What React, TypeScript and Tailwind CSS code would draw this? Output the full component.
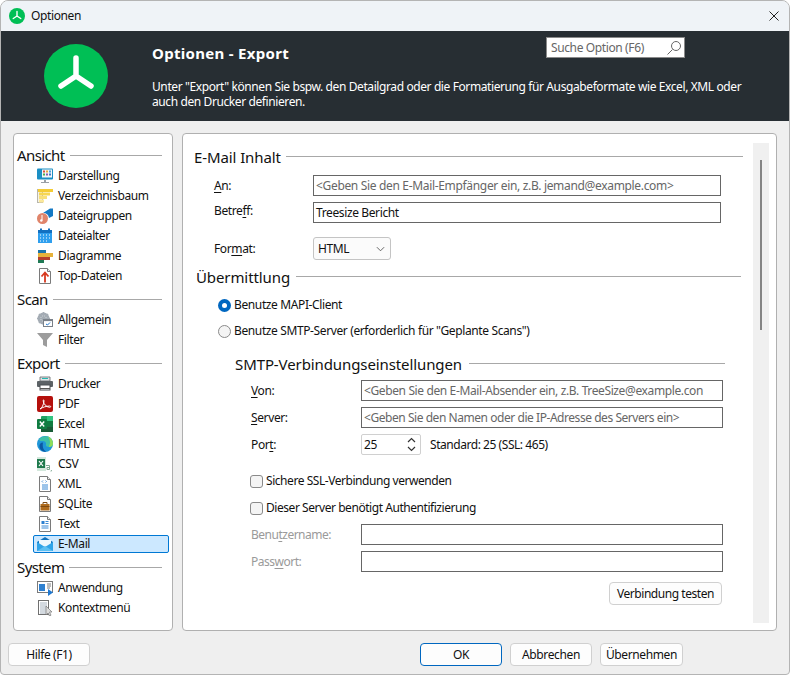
import React from "react";

const Page = ({ children }: { children?: React.ReactNode }) => (
  <svg viewBox="0 0 16 16" className="w-4 h-4">
    <path d="M2.5.5h8l3 3v12h-11z" fill="#fff" stroke="#7a7a7a" />
    <path d="M10.5.5v3h3" fill="#eee" stroke="#7a7a7a" />
    {children}
  </svg>
);

const icons: Record<string, React.ReactNode> = {
  Darstellung: (
    <svg viewBox="0 0 16 16" className="w-4 h-4">
      <rect x="0" y="0.5" width="16" height="11" rx="1" fill="#1b8fc4" />
      <rect x="5" y="1.5" width="10" height="8" fill="#f4f6f8" />
      <rect x="6" y="2.5" width="2" height="2" fill="#d9503f" />
      <rect x="9" y="2.5" width="2" height="2" fill="#e8a93a" />
      <rect x="12" y="2.5" width="2" height="2" fill="#4a9fd8" />
      <rect x="6" y="5.5" width="2" height="2" fill="#4caf50" />
      <rect x="9" y="5.5" width="2" height="2" fill="#8c5ab0" />
      <rect x="12" y="5.5" width="2" height="2" fill="#3c78c8" />
      <rect x="7" y="12" width="2" height="2" fill="#9aa0a6" />
      <rect x="4" y="14" width="8" height="1" fill="#9aa0a6" />
    </svg>
  ),
  Verzeichnisbaum: (
    <svg viewBox="0 0 16 16" className="w-4 h-4">
      <rect x="0.5" y="1.5" width="5" height="13" fill="#f6f3e6" stroke="#b8b6ac" />
      <rect x="1" y="1" width="15" height="3" fill="#f4cc35" />
      <rect x="2" y="4.500" width="11" height="3" fill="#f6d653" />
      <rect x="2" y="8" width="8" height="3" fill="#f8df78" />
      <rect x="2" y="11.500" width="5" height="3" fill="#fbe89a" />
    </svg>
  ),
  Dateigruppen: (
    <svg viewBox="0 0 16 16" className="w-4 h-4">
      <path d="M6 5 13 .5h3V8l-4 2a6 6 0 0 0-6-5z" fill="#1479c4" />
      <circle cx="5.5" cy="10.5" r="5.5" fill="#e0846a" />
      <path d="M5 7v5.5" stroke="#fff" strokeWidth="1" />
      <circle cx="4.3" cy="12.5" r="1.2" fill="#fff" />
    </svg>
  ),
  Dateialter: (
    <svg viewBox="0 0 16 16" className="w-4 h-4">
      <rect x="1" y="2" width="14" height="13" fill="#2f9fee" />
      <rect x="1" y="2" width="14" height="3" fill="#1270c0" />
      <rect x="3" y="0.5" width="2" height="3" fill="#1270c0" />
      <rect x="11" y="0.5" width="2" height="3" fill="#1270c0" />
      <path d="M3 7h1M6 7h1M9 7h1M12 7h1M3 10h1M6 10h1M9 10h1M12 10h1M3 13h1M6 13h1M9 13h1" stroke="#fff" />
    </svg>
  ),
  Diagramme: (
    <svg viewBox="0 0 16 16" className="w-4 h-4">
      <rect x="1" y="2" width="8" height="4" fill="#1b75a8" />
      <rect x="1" y="5" width="15" height="4" fill="#e6b23a" />
      <rect x="1" y="9" width="12" height="3" fill="#b5402c" />
      <rect x="1" y="12" width="6" height="3" fill="#1f7a55" />
    </svg>
  ),
  "Top-Dateien": (
    <Page>
      <path d="M8 14.500V5M4.500 8.500 8 4.500l3.500 4" fill="none" stroke="#d8391f" strokeWidth="1.800" />
    </Page>
  ),
  Allgemein: (
    <svg viewBox="0 0 16 16" className="w-4 h-4">
      <circle cx="6.5" cy="6.5" r="4.5" fill="none" stroke="#a4acb4" strokeWidth="3" />
      <path d="M6.5 0v13M0 6.5h13M2 2l9 9M11 2l-9 9" stroke="#a4acb4" strokeWidth="1.6" />
      <rect x="6.5" y="7.5" width="9" height="7" fill="#fff" stroke="#7a8088" />
      <rect x="6.5" y="7.5" width="9" height="1.6" fill="#7a8088" />
      <path d="M9 12l1.5 1 2.500-2.500" fill="none" stroke="#1f78d0" />
    </svg>
  ),
  Filter: (
    <svg viewBox="0 0 16 16" className="w-4 h-4">
      <path d="M0 1h16L10 8v7l-4-2V8z" fill="#9c9c9c" />
    </svg>
  ),
  Drucker: (
    <svg viewBox="0 0 16 16" className="w-4 h-4">
      <path d="M3 1h10v4H3z" fill="#dfe3e6" stroke="#606468" strokeWidth=".8" />
      <rect x="5" y="2" width="6" height="1" fill="#22b8b0" />
      <rect x="0" y="5" width="16" height="6" rx="1" fill="#5c6266" />
      <rect x="3" y="9" width="10" height="5" fill="#fff" stroke="#4a4f52" />
      <path d="M3 12.500h10" stroke="#555" />
    </svg>
  ),
  PDF: (
    <svg viewBox="0 0 16 16" className="w-4 h-4">
      <rect x="0" y="0" width="16" height="16" rx="2" fill="#b5100c" />
      <path d="M3 13c2-1 3.500-4 4-8 .2-1.500-1-1.500-.8 0 .4 3 3 6 6.500 6.300 1.500 0 1.300-1.500-.2-1.300C9 10.300 6 11 3 13z" fill="none" stroke="#fff" strokeWidth="1" />
    </svg>
  ),
  Excel: (
    <svg viewBox="0 0 16 16" className="w-4 h-4">
      <rect x="4" y="0" width="12" height="16" rx="1" fill="#21a366" />
      <rect x="10" y="0" width="6" height="5" fill="#33c481" />
      <rect x="4" y="5" width="12" height="5.500" fill="#107c41" />
      <rect x="4" y="10.500" width="12" height="5.500" fill="#185c37" />
      <rect x="0" y="3" width="10" height="10" rx="1" fill="#107c41" />
      <path d="M2.800 5.500l4.400 5M7.200 5.500l-4.400 5" stroke="#fff" strokeWidth="1.400" />
    </svg>
  ),
  HTML: (
    <svg viewBox="0 0 16 16" className="w-4 h-4">
      <circle cx="8" cy="8" r="8" fill="#1f96d8" />
      <path d="M2 3.500C4 .5 8-.5 11 .5c3 1 5 4 5 7.500 0 2-2 3-4 3-2 0-3.500-1-3-2.500.5-2-1-3.500-3-3.500-2 0-3.500.5-4-1.500z" fill="#3fc1a8" />
      <path d="M11 .5c3 1 5 4 5 7.500 0 2-2 3-4 3 0-2 1-2.500 1-4.500S12 2 11 .5z" fill="#8fdc5a" />
      <path d="M6 6.500c-2.500 0-4 2-3.500 4.500.6 3 3.500 5 7 4.800-2.500-1.300-4.500-4-3.500-9.300z" fill="#0c59a4" />
    </svg>
  ),
  CSV: (
    <svg viewBox="0 0 16 16" className="w-4 h-4">
      <rect x="0" y="1" width="9" height="14" fill="#d3e8dc" />
      <rect x="0" y="3" width="8" height="9" fill="#1f7a4d" />
      <path d="M2 5l4 5M6 5l-4 5" stroke="#fff" strokeWidth="1.200" />
      <path d="M9 9.500h3.500v4M12.500 11.500H10v2h2.500M14.500 14l-.5 1.500" fill="none" stroke="#7ea892" strokeWidth="1" />
    </svg>
  ),
  XML: (
    <Page>
      <path d="M6 4.500 5 5.500l1 1M8.500 4.500l1 1-1 1" fill="none" stroke="#2a7fd0" strokeWidth=".8" />
      <path d="M5 9h6M5 11h6M5 13h6" stroke="#3a8ad6" />
    </Page>
  ),
  SQLite: (
    <Page>
      <rect x="3.500" y="8" width="9" height="6.500" fill="#b06c1e" />
      <path d="M6 8V6.500h4V8" fill="none" stroke="#7e4a12" />
      <rect x="3.500" y="10" width="9" height="1" fill="#7e4a12" />
    </Page>
  ),
  Text: (
    <Page>
      <rect x="4.500" y="5" width="3" height="3" fill="#2a7fd0" />
      <path d="M8.500 5.500h3M8.500 7.500h3M4.500 10h7M4.500 12h7" stroke="#3a8ad6" />
    </Page>
  ),
  "E-Mail": (
    <svg viewBox="0 0 16 14" className="w-4 h-[14px]">
      <path d="M0 5 8 0l8 5v9H0z" fill="#1272bd" />
      <path d="M2 3h12v7H2z" fill="#eef8fd" />
      <path d="M0 5l8 5 8-5v9H0z" fill="#30a4e8" />
      <path d="M0 14l8-5 8 5z" fill="#5cc0f2" />
    </svg>
  ),
  Anwendung: (
    <svg viewBox="0 0 16 16" className="w-4 h-4">
      <rect x="0.500" y="1.500" width="15" height="11" fill="#fff" stroke="#7a7a7a" />
      <rect x="2" y="4" width="6" height="7" fill="#2f80d0" />
      <path d="M10 4h4M10 6h4M10 8h3" stroke="#7a7a7a" />
      <path d="M11 9v7l5-3.500z" fill="#1f78d0" />
    </svg>
  ),
  "Kontextmenü": (
    <svg viewBox="0 0 16 16" className="w-4 h-4">
      <rect x="1.500" y="0.500" width="10" height="14" fill="#fff" stroke="#707070" />
      <path d="M3 3h7M3 5h7M3 7h7M3 9h7M3 11h7M3 13h7" stroke="#a8b4c0" />
      <path d="M9 6v9l2-2 1.500 3 1.500-.8L12.500 12H15z" fill="#ddd" stroke="#777" strokeWidth=".7" />
    </svg>
  ),
};

const Logo = ({ className }: { className: string }) => (
  <svg viewBox="0 0 64 64" className={className}>
    <circle cx="32" cy="32" r="32" fill="#00bf55" />
    <path d="M32 14v18L17 42M32 32l15 10" fill="none" stroke="#fff" strokeWidth="5.500" strokeLinecap="round" strokeLinejoin="round" />
  </svg>
);

const SideHeading = ({ t }: { t: string }) => (
  <div className="h-6 flex items-center pt-[2px] gap-[5px] pr-[10px] pl-[3px]">
    <span className="text-[15px] leading-5 tracking-[-0.6px] text-[#111]">{t}</span>
    <span className="flex-1 h-px bg-[#a8a8a8]" />
  </div>
);

const SideItem = ({ t, selected }: { t: string; selected?: boolean }) => (
  <div className="h-5 py-px ml-[19px] mr-[3px]">
    <div
      className={
        "h-[18px] flex items-center gap-[5px] pl-[3px] rounded-[2px] border " +
        (selected ? "bg-[#cce8ff] border-[#0078d4]" : "border-transparent")
      }
    >
      <span className="w-4 flex justify-center shrink-0">{icons[t]}</span>
      <span className="text-[#111]">{t}</span>
    </div>
  </div>
);

const SectionHeading = ({ t, className, line }: { t: string; className: string; line: string }) => (
  <div className={"flex items-center " + className}>
    <span className="text-[15px] leading-5 tracking-[-0.1px] text-[#111] whitespace-nowrap">{t}</span>
    <span className={"h-px bg-[#a8a8a8] -mt-[2px] " + line} />
  </div>
);

const TextBox = ({ v, placeholder, className }: { v: string; placeholder?: boolean; className: string }) => (
  <div
    className={
      "h-[21px] border border-[#666] bg-white flex items-center pl-[2px] whitespace-nowrap overflow-hidden " +
      (placeholder ? "text-[#666] " : "text-[#111] ") +
      className
    }
  >
    {v}
  </div>
);

const Btn = ({ t, className }: { t: string; className: string }) => (
  <div className={"h-[23px] flex items-center justify-center rounded-[4px] border bg-[#fdfdfd] text-[#111] " + className}>{t}</div>
);

const Ul = ({ c }: { c: string }) => <span className="underline underline-offset-2">{c}</span>;

const Radio = ({ on }: { on?: boolean }) =>
  on ? (
    <span className="w-[13px] h-[13px] rounded-full bg-[#0067c0] flex items-center justify-center shrink-0">
      <span className="w-[5px] h-[5px] rounded-full bg-white" />
    </span>
  ) : (
    <span className="w-[13px] h-[13px] rounded-full border border-[#8a8a8a] bg-[#f4f4f4] shrink-0" />
  );

const Check = () => <span className="w-[13px] h-[13px] rounded-[3px] border border-[#8a8a8a] bg-[#f4f4f4] shrink-0" />;

export default function App() {
  return (
    <div className="w-[790px] h-[675px] flex flex-col bg-[#efefef] border border-[#b4b4b4] rounded-t-[8px] rounded-b-[4px] overflow-hidden text-[12px] leading-4 tracking-[-0.38px] text-[#111] font-['Noto_Sans',sans-serif]">
      <div className="h-[30px] bg-[#eff3f7] flex items-center pl-2 pr-[10px] shrink-0">
        <Logo className="w-4 h-4" />
        <span className="ml-[6px]">Optionen</span>
        <svg viewBox="0 0 10 10" className="w-[10px] h-[10px] ml-auto">
          <path d="M.5.500l9 9M9.500.500l-9 9" stroke="#222" strokeWidth="1" />
        </svg>
      </div>

      <div className="h-[90px] bg-[#272e33] flex shrink-0">
        <div className="pl-[43px] pt-[13px] w-[151px] shrink-0">
          <Logo className="w-16 h-16" />
        </div>
        <div className="w-[600px] text-white">
          <div className="flex items-start h-[46px]">
            <div className="mt-[12px] text-[15px] leading-5 font-bold w-[394px] tracking-[0.3px]">Optionen - Export</div>
            <div className="mt-[6px] w-[139px] h-[21px] bg-white border border-[#8a8a8a] flex items-center pl-1 pr-[2px] text-[#666]">
              <span>Suche Option (F6)</span>
              <svg viewBox="0 0 16 16" className="w-[16px] h-[16px] ml-auto">
                <circle cx="10" cy="6" r="4.500" fill="none" stroke="#666" />
                <path d="M6.500 9.500 1.500 14.500" stroke="#666" />
              </svg>
            </div>
          </div>
          <div className="flex flex-col mt-[2px] gap-0 whitespace-nowrap tracking-[-0.4px]">
            <span className="h-[15px] leading-[15px]">Unter "Export" können Sie bspw. den Detailgrad oder die Formatierung für Ausgabeformate wie Excel, XML oder</span>
            <span className="h-[15px] leading-[15px]">auch den Drucker definieren.</span>
          </div>
        </div>
      </div>

      <div className="flex-1 flex gap-[9px] pl-3 pr-3 pt-3">
        <div className="w-[160px] h-[498px] bg-white border border-[#b0b0b0] rounded-[4px] pt-[8px]">
          <SideHeading t="Ansicht" />
          {["Darstellung", "Verzeichnisbaum", "Dateigruppen", "Dateialter", "Diagramme", "Top-Dateien"].map((t) => (
            <SideItem key={t} t={t} />
          ))}
          <SideHeading t="Scan" />
          {["Allgemein", "Filter"].map((t) => (
            <SideItem key={t} t={t} />
          ))}
          <SideHeading t="Export" />
          {["Drucker", "PDF", "Excel", "HTML", "CSV", "XML", "SQLite", "Text"].map((t) => (
            <SideItem key={t} t={t} />
          ))}
          <SideItem t="E-Mail" selected />
          <SideHeading t="System" />
          {["Anwendung", "Kontextmenü"].map((t) => (
            <SideItem key={t} t={t} />
          ))}
        </div>

        <div className="w-[595px] h-[498px] bg-white border border-[#b0b0b0] rounded-[4px] flex pt-[9px]">
          <div className="w-[560px] shrink-0 pl-[11px]">
            <SectionHeading t="E-Mail Inhalt" className="h-5 mt-[4px] gap-[5px]" line="w-[457px]" />
            <div className="flex items-center mt-[8px] ml-[20px]">
              <span className="w-[99px]"><Ul c="A" />n:</span>
              <TextBox v="<Geben Sie den E-Mail-Empfänger ein, z.B. jemand@example.com>" placeholder className="w-[408px] tracking-[-0.33px]" />
            </div>
            <div className="flex items-center mt-[6px] ml-[20px]">
              <span className="w-[99px] mb-[4px]">Betre<Ul c="f" />f:</span>
              <TextBox v="Treesize Bericht" className="w-[408px]" />
            </div>
            <div className="flex items-center mt-[14px] ml-[20px]">
              <span className="w-[99px]">For<Ul c="m" />at:</span>
              <div className="w-[78px] h-[23px] border border-[#c4c4c4] rounded-[3px] bg-[#fbfbfb] flex items-center pl-[4px] pr-[5px] justify-between">
                <span>HTML</span>
                <svg viewBox="0 0 10 6" className="w-[9px] h-[6px]">
                  <path d="M1 1l4 4 4-4" fill="none" stroke="#555" />
                </svg>
              </div>
            </div>
            <SectionHeading t="Übermittlung" className="h-5 mt-[7px] ml-[2px] gap-[6px]" line="w-[445px]" />
            <div className="flex items-center gap-[3px] mt-[10px] ml-[24px] h-4">
              <Radio on />
              <span>Benutze MAPI-Client</span>
            </div>
            <div className="flex items-center gap-[3px] mt-[10px] ml-[24px] h-4">
              <Radio />
              <span>Benutze SMTP-Server (erforderlich für "Geplante Scans")</span>
            </div>
            <div className="ml-[41px] w-[490px]">
              <SectionHeading t="SMTP-Verbindungseinstellungen" className="h-5 mt-[15px] gap-[7px]" line="w-[256px]" />
              <div className="flex items-center mt-[6px] ml-[16px]">
                <span className="w-[110px]"><Ul c="V" />on:</span>
                <TextBox v="<Geben Sie den E-Mail-Absender ein, z.B. TreeSize@example.con" placeholder className="w-[362px]" />
              </div>
              <div className="flex items-center mt-[6px] ml-[16px]">
                <span className="w-[110px]"><Ul c="S" />erver:</span>
                <TextBox v="<Geben Sie den Namen oder die IP-Adresse des Servers ein>" placeholder className="w-[362px] tracking-[-0.45px]" />
              </div>
              <div className="flex items-center mt-[6px] ml-[16px]">
                <span className="w-[110px]">Por<Ul c="t" />:</span>
                <div className="w-[60px] h-[21px] border border-[#d0d0d0] rounded-[2px] flex items-center pl-[2px] pr-[4px] justify-between">
                  <span>25</span>
                  <svg viewBox="0 0 9 15" className="w-[9px] h-[15px]">
                    <path d="M1 5l3.500-3.500L8 5M1 10l3.500 3.500L8 10" fill="none" stroke="#333" strokeWidth="1.200" />
                  </svg>
                </div>
                <span className="ml-[9px] tracking-[-0.45px]">Standard: 25 (SSL: 465)</span>
              </div>
              <div className="flex items-center gap-[3px] mt-[18px] ml-[15px] h-4">
                <Check />
                <span className="tracking-[-0.45px]">Sichere SSL-Verbindung verwenden</span>
              </div>
              <div className="flex items-center gap-[3px] mt-[11px] ml-[15px] h-4">
                <Check />
                <span className="tracking-[-0.45px]">Dieser Server benötigt Authentifizierung</span>
              </div>
              <div className="flex items-center mt-[8px] ml-[16px]">
                <span className="w-[110px] text-[#9a9a9a] tracking-[-0.5px]">Benu<Ul c="t" />zername:</span>
                <TextBox v="" className="w-[362px]" />
              </div>
              <div className="flex items-center mt-[6px] ml-[16px]">
                <span className="w-[110px] text-[#9a9a9a] tracking-[-0.5px]">Pass<Ul c="w" />ort:</span>
                <TextBox v="" className="w-[362px]" />
              </div>
              <div className="flex justify-end mt-[10px] mr-[3px]">
                <Btn t="Verbindung testen" className="w-[113px] h-[21px] border-[#d0d0d0] tracking-[-0.45px]" />
              </div>
            </div>
          </div>
          <div className="w-4 h-[480px] bg-[#f0f0f0] ml-[10px] flex justify-center">
            <div className="w-[2px] h-[170px] bg-[#858585] mt-[17px]" />
          </div>
        </div>
      </div>

      <div className="h-[43px] flex items-start pt-[12px] pl-[7px] shrink-0">
        <Btn t="Hilfe (F1)" className="w-[82px] border-[#d0d0d0]" />
        <Btn t="OK" className="w-[82px] ml-[330px] border-[#0067c0]" />
        <Btn t="Abbrechen" className="w-[82px] ml-[8px] border-[#d0d0d0]" />
        <Btn t="Übernehmen" className="w-[83px] ml-[8px] border-[#d0d0d0]" />
      </div>
    </div>
  );
}
